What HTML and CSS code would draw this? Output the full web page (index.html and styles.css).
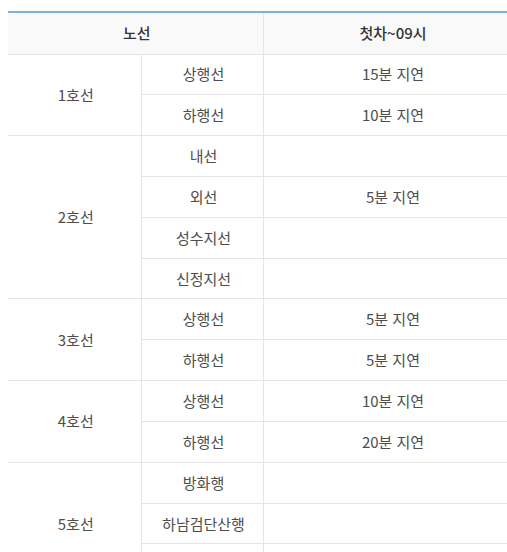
FILE: index.html
```html
<!DOCTYPE html>
<html lang="ko">
<head>
<meta charset="utf-8">
<link rel="stylesheet" href="styles.css">
</head>
<body>
<table class="delay">
  <colgroup><col class="c1"><col class="c2"><col class="c3"></colgroup>
  <thead>
    <tr><th colspan="2">노선</th><th>첫차~09시</th></tr>
  </thead>
  <tbody>
    <tr><td rowspan="2">1호선</td><td>상행선</td><td>15분 지연</td></tr>
    <tr><td>하행선</td><td>10분 지연</td></tr>
    <tr><td rowspan="4">2호선</td><td>내선</td><td></td></tr>
    <tr><td>외선</td><td>5분 지연</td></tr>
    <tr><td>성수지선</td><td></td></tr>
    <tr><td>신정지선</td><td></td></tr>
    <tr><td rowspan="2">3호선</td><td>상행선</td><td>5분 지연</td></tr>
    <tr><td>하행선</td><td>5분 지연</td></tr>
    <tr><td rowspan="2">4호선</td><td>상행선</td><td>10분 지연</td></tr>
    <tr><td>하행선</td><td>20분 지연</td></tr>
    <tr><td rowspan="3">5호선</td><td>방화행</td><td></td></tr>
    <tr><td>하남검단산행</td><td></td></tr>
    <tr><td>마천행</td><td></td></tr>
  </tbody>
</table>
</body>
</html>
```

FILE: styles.css
```css
html, body {
  margin: 0;
  padding: 0;
  background: #fff;
}
body {
  padding: 11px 0 0 8px;
  font-family: "Noto Sans CJK KR", "Noto Sans", sans-serif;
  font-size: 15px;
  color: #4d4d4d;
}
.delay {
  width: 512px;
  border-collapse: collapse;
  table-layout: fixed;
  border-top: 2px solid #7fb0dc;
}
.c1 { width: 133px; }
.c2 { width: 122px; }
.c3 { width: 257px; }
.delay th,
.delay td {
  border: 1px solid #e5e5e5;
  text-align: center;
  vertical-align: middle;
  padding: 0 0 0 3px;
  line-height: 20px;
}
.delay th {
  height: 42px;
  box-sizing: border-box;
  background: #f9f9f9;
  color: #333;
  font-weight: 500;
  border-top: none;
}
.delay td {
  height: 39.83px;
}
.delay tr > :first-child { border-left: none; }
```
